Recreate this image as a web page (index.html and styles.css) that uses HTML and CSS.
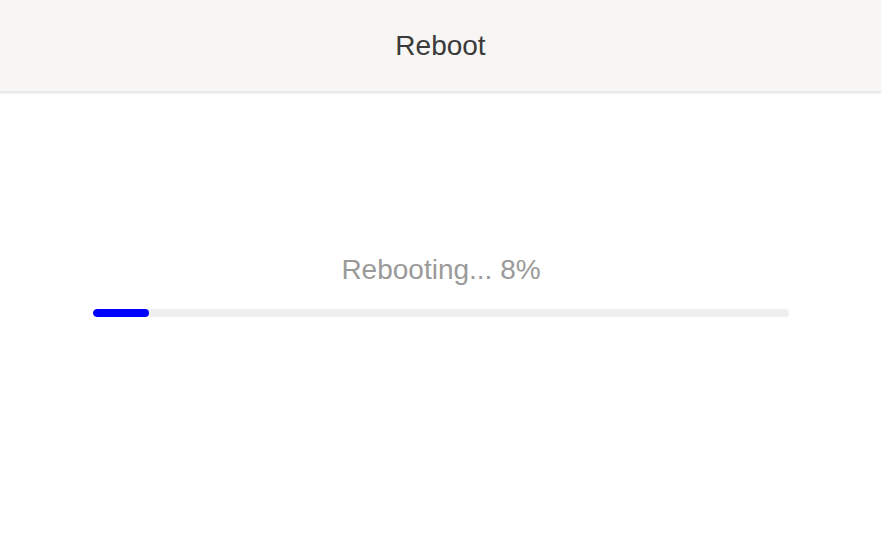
FILE: index.html
```html
<!DOCTYPE html>
<html>
<head>
<meta charset="utf-8">
<link rel="stylesheet" href="styles.css">
</head>
<body>
<div class="page">
  <header class="header">Reboot</header>
  <main class="content">
    <div class="status">Rebooting... 8%</div>
    <div class="track"><div class="fill" style="width:8%"></div></div>
  </main>
</div>
</body>
</html>
```
FILE: styles.css
```css
html, body {
  margin: 0;
  padding: 0;
  background: #ffffff;
  font-family: "Liberation Sans", Arial, sans-serif;
}
.page {
  width: 881px;
}
.header {
  height: 90px;
  background: #f7f6f4;
  border-bottom: 2px solid #ebeae8;
  box-shadow: 0 1px 2px rgba(0,0,0,0.05);
  display: flex;
  align-items: center;
  justify-content: center;
  font-size: 28px;
  color: #3a3a3a;
  padding-top: 1px;
  box-sizing: content-box;
}
.content {
  padding: 161px 92px 0 93px;
  display: flex;
  flex-direction: column;
  align-items: stretch;
}
.status {
  text-align: center;
  font-size: 28px;
  color: #9a9a9a;
  line-height: 32px;
}
.track {
  margin-top: 23px;
  height: 8px;
  border-radius: 4px;
  background: #efefef;
  overflow: hidden;
}
.fill {
  height: 100%;
  background: #0000ff;
  border-radius: 4px;
}
```
